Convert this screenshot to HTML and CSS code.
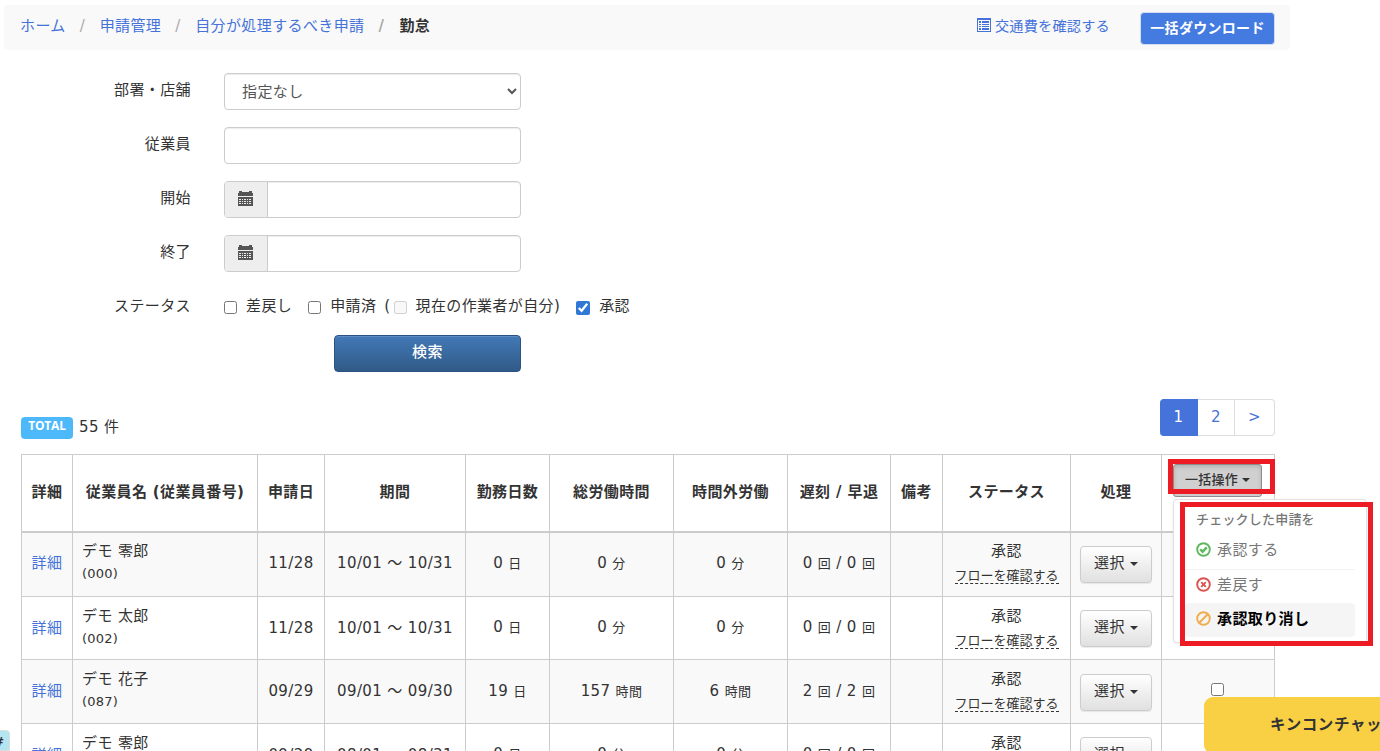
FILE: index.html
```
<!doctype html>
<html lang="ja">
  <head>
    <meta charset="utf-8" />
    <title>自分が処理するべき申請 - 勤怠</title>
    <meta name="viewport" content="width=device-width, initial-scale=1" />
    <link rel="stylesheet" href="styles.css">
  </head>

  <body>
    <svg class="defs" width="0" height="0">
      <symbol id="calendar" viewBox="0 0 15 16">
        <path d="M0 2h1V0h3v1h7V0h3v2h1v3H0z" />
        <path fill-rule="evenodd" d="M0 6h15v9H0zM1 8v1h2V8zm3 0v1h1V8zm2 0v1h2V8zm3 0v1h1V8zm2 0v1h2V8zM1 10v1h2v-1zm3 0v1h1v-1zm2 0v1h2v-1zm3 0v1h1v-1zm2 0v1h2v-1zM1 12v1h2v-1zm3 0v1h1v-1zm2 0v1h2v-1zm3 0v1h1v-1zm2 0v1h2v-1z" />
      </symbol>
    </svg>

    <div class="breadcrumb">
      <ul class="crumbs">
        <li><a href="#">ホーム</a></li>
        <li><a href="#">申請管理</a></li>
        <li><a href="#">自分が処理するべき申請</a></li>
        <li class="active">勤怠</li>
      </ul>
      <a class="expense-link" href="#">
        <svg width="14" height="14" viewBox="0 0 14 14">
          <path fill-rule="evenodd" d="M0 0h14v14H0zM1 2v11h12V2z" />
          <path d="M2 3h2v2H2zM5 3h7v2H5zM2 6h2v1H2zM5 6h7v1H5zM2 8h2v1H2zM5 8h7v1H5zM2 10h2v2H2zM5 10h7v2H5z" />
        </svg>交通費を確認する</a>
      <button class="btn-download">一括ダウンロード</button>
    </div>

    <form class="search">
      <label>部署・店舗</label>
      <select class="control"><option>指定なし</option></select>
      <label>従業員</label>
      <input class="control" type="text">
      <label>開始</label>
      <div class="control group">
        <span class="addon"><svg width="15" height="16"><use href="#calendar" /></svg></span>
        <input type="text">
      </div>
      <label>終了</label>
      <div class="control group">
        <span class="addon"><svg width="15" height="16"><use href="#calendar" /></svg></span>
        <input type="text">
      </div>
      <label>ステータス</label>
      <div class="checks">
        <input type="checkbox"><span class="c1">差戻し</span>
        <input type="checkbox"><span class="c2">申請済</span><span class="paren">(</span>
        <input type="checkbox" disabled><span class="c3">現在の作業者が自分)</span>
        <input type="checkbox" checked><span>承認</span>
      </div>
      <button class="btn-search" type="button">検索</button>
    </form>

    <div class="summary">
      <div class="total"><span class="badge">TOTAL</span>55 件</div>
      <div class="pagination">
        <a class="current" href="#">1</a><a href="#">2</a><a href="#">&gt;</a>
      </div>
    </div>

    <table class="list">
      <colgroup>
        <col class="w-detail"><col class="w-name"><col class="w-date"><col class="w-term">
        <col class="w-days"><col class="w-work"><col class="w-over"><col class="w-late">
        <col class="w-note"><col class="w-status"><col class="w-action"><col class="w-bulk">
      </colgroup>
      <thead>
        <tr>
          <th>詳細</th>
          <th>従業員名 (従業員番号)</th>
          <th>申請日</th>
          <th>期間</th>
          <th>勤務日数</th>
          <th>総労働時間</th>
          <th>時間外労働</th>
          <th>遅刻 / 早退</th>
          <th>備考</th>
          <th>ステータス</th>
          <th>処理</th>
          <th class="bulk">
            <div class="dropdown">
              <button class="btn-bulk">一括操作<i class="caret"></i></button>
              <div class="mark mark-button"></div>
              <div class="menu">
                <div class="menu-header">チェックした申請を</div>
                <a class="item">
                  <svg width="15" height="15" viewBox="0 0 15 15" fill="none" stroke="#5cb85c">
                    <circle cx="7.5" cy="7.5" r="6.3" stroke-width="1.9" />
                    <path d="M4.2 7.4l2.4 2.3 4.2-4.3" stroke-width="2.4" />
                  </svg>承認する</a>
                <div class="divider"></div>
                <a class="item">
                  <svg width="15" height="15" viewBox="0 0 15 15" fill="none" stroke="#d9534f">
                    <circle cx="7.5" cy="7.5" r="6.3" stroke-width="1.9" />
                    <path d="M5.2 5.2l4.6 4.6M9.8 5.2l-4.6 4.6" stroke-width="1.9" />
                  </svg>差戻す</a>
                <a class="item selected">
                  <svg width="15" height="15" viewBox="0 0 15 15" fill="none" stroke="#f0ad4e">
                    <circle cx="7.5" cy="7.5" r="6.3" stroke-width="1.9" />
                    <path d="M3.2 11.8l8.6-8.6" stroke-width="2" />
                  </svg>承認取り消し</a>
              </div>
              <div class="mark mark-menu"></div>
            </div>
          </th>
        </tr>
      </thead>
      <tbody>
        <tr>
          <td><a href="#">詳細</a></td>
          <td class="name">デモ 零郎<small>(000)</small></td>
          <td>11/28</td>
          <td>10/01 ～ 10/31</td>
          <td>0 <em>日</em></td>
          <td>0 <em>分</em></td>
          <td>0 <em>分</em></td>
          <td>0 <em>回</em> / 0 <em>回</em></td>
          <td></td>
          <td class="status">承認<span class="flow">フローを確認する</span></td>
          <td><button class="btn-select">選択<i class="caret"></i></button></td>
          <td><input type="checkbox"></td>
        </tr>
        <tr>
          <td><a href="#">詳細</a></td>
          <td class="name">デモ 太郎<small>(002)</small></td>
          <td>11/28</td>
          <td>10/01 ～ 10/31</td>
          <td>0 <em>日</em></td>
          <td>0 <em>分</em></td>
          <td>0 <em>分</em></td>
          <td>0 <em>回</em> / 0 <em>回</em></td>
          <td></td>
          <td class="status">承認<span class="flow">フローを確認する</span></td>
          <td><button class="btn-select">選択<i class="caret"></i></button></td>
          <td><input type="checkbox"></td>
        </tr>
        <tr>
          <td><a href="#">詳細</a></td>
          <td class="name">デモ 花子<small>(087)</small></td>
          <td>09/29</td>
          <td>09/01 ～ 09/30</td>
          <td>19 <em>日</em></td>
          <td>157 <em>時間</em></td>
          <td>6 <em>時間</em></td>
          <td>2 <em>回</em> / 2 <em>回</em></td>
          <td></td>
          <td class="status">承認<span class="flow">フローを確認する</span></td>
          <td><button class="btn-select">選択<i class="caret"></i></button></td>
          <td><input type="checkbox"></td>
        </tr>
        <tr>
          <td><a href="#">詳細</a></td>
          <td class="name">デモ 零郎<small>(000)</small></td>
          <td>09/29</td>
          <td>08/01 ～ 08/31</td>
          <td>0 <em>日</em></td>
          <td>0 <em>分</em></td>
          <td>0 <em>分</em></td>
          <td>0 <em>回</em> / 0 <em>回</em></td>
          <td></td>
          <td class="status">承認<span class="flow">フローを確認する</span></td>
          <td><button class="btn-select">選択<i class="caret"></i></button></td>
          <td><input type="checkbox"></td>
        </tr>
      </tbody>
    </table>

    <div class="hash">#</div>
    <div class="chat">キンコンチャット</div>
  </body>
</html>
```
FILE: styles.css
```
*,
*::before {
  box-sizing: border-box;
}
html,
body {
  height: 100%;
  overflow: hidden;
}
body {
  margin: 0;
  padding: 5px 0 0 4px;
  background: #fff;
  color: #333;
  font-family: 'DejaVu Sans', 'Noto Sans CJK JP', sans-serif;
  font-size: 15px;
  letter-spacing: 0.38px;
  line-height: 22px;
}
button,
select,
input {
  font: inherit;
  letter-spacing: inherit;
  color: inherit;
}
a {
  color: #4573d9;
  text-decoration: none;
}
.defs {
  position: absolute;
}

/* breadcrumb */
.breadcrumb {
  display: flex;
  align-items: flex-start;
  width: 1286px;
  height: 45px;
  padding: 7px 15px 0 16px;
  background: #f9f9f9;
  border-radius: 4px;
}
.crumbs {
  display: flex;
  flex: 1;
  margin: 3px 0 0;
  padding: 0;
  list-style: none;
}
.crumbs li + li::before {
  content: '/';
  display: inline-block;
  width: 34px;
  padding-left: 14px;
  color: #aaa;
}
.crumbs .active {
  font-weight: bold;
}
.crumbs li.active::before {
  width: 35px;
}
.expense-link {
  display: flex;
  align-items: center;
  gap: 4px;
  margin: 3px 30px 0 0;
  font-size: 14.2px;
  letter-spacing: 0.2px;
}
.expense-link svg {
  margin-bottom: 2px;
  fill: #4573d9;
}
.btn-download {
  width: 135px;
  height: 33px;
  padding: 0 0 2px;
  border: 1px solid #d5dcef;
  border-radius: 4px;
  background: #447be0;
  color: #fff;
  font-size: 14px;
  letter-spacing: 0.3px;
  font-weight: bold;
}

/* search form */
.search {
  display: grid;
  grid-template-columns: 187px 297px;
  grid-template-rows: 54px 54px 53.5px 54px 46.5px 37px;
  column-gap: 33px;
  padding-top: 23px;
}
.search label {
  padding-top: 6px;
  text-align: right;
}
.control {
  width: 297px;
  height: 37px;
  border: 1px solid #ccc;
  border-radius: 4px;
  background: #fff;
  box-shadow: inset 0 1px 1px rgba(0, 0, 0, 0.075);
  outline: none;
}
select.control {
  padding: 0 0 0 13px;
  color: #555;
}
.group {
  display: flex;
}
.group .addon {
  display: flex;
  align-items: center;
  justify-content: center;
  width: 43px;
  padding: 0 1px 1px 0;
  border-right: 1px solid #ccc;
  border-radius: 3px 0 0 3px;
  background: #eee;
}
.addon svg {
  fill: #555;
}
.group input {
  flex: 1;
  min-width: 0;
  border: 0;
  background: none;
}
.checks {
  display: flex;
  align-items: flex-start;
  padding-top: 6px;
  white-space: nowrap;
}
.checks input {
  flex: none;
  width: 13px;
  height: 13px;
  margin: 6px 9px 0 0;
  accent-color: #2f78d6;
}
.checks input:checked {
  width: 14px;
  height: 14px;
}
.c1 {
  margin-right: 16px;
}
.c2 {
  margin-right: 8px;
}
.paren {
  margin-right: 3px;
}
.c3 {
  margin-right: 16px;
}
.btn-search {
  grid-column: 2;
  width: 187px;
  height: 37px;
  margin-left: 110px;
  padding: 0 0 3px;
  border: 1px solid #2b5280;
  border-radius: 4px;
  background: linear-gradient(#4279b7, #305a87);
  box-shadow: inset 0 1px 0 rgba(255, 255, 255, 0.15);
  color: #fff;
  font-weight: 500;
}

/* total and pages */
.summary {
  display: flex;
  justify-content: space-between;
  width: 1271px;
  height: 55px;
  margin-top: 27px;
  padding-left: 17px;
}
.total {
  display: flex;
  padding-top: 17px;
}
.badge {
  width: 52px;
  height: 22px;
  margin: 1px 6px 0 0;
  border-radius: 4px;
  background: #4db8fa;
  color: #fff;
  font: bold 12px/18px 'Open Sans', sans-serif;
  letter-spacing: -0.2px;
  text-align: center;
}
.pagination {
  display: flex;
  height: 37px;
}
.pagination a {
  width: 37px;
  border: 1px solid #ddd;
  border-left: 0;
  line-height: 34px;
  text-align: center;
}
.pagination a:last-child {
  width: 40px;
  border-radius: 0 4px 4px 0;
}
.pagination .current {
  width: 38px;
  border-color: #4573d9;
  border-radius: 4px 0 0 4px;
  background: #4573d9;
  color: #fff;
}

/* list */
.list {
  width: 1254px;
  margin-left: 17px;
  border-collapse: collapse;
  table-layout: fixed;
}
.w-detail { width: 51px; }
.w-name { width: 185px; }
.w-date { width: 67px; }
.w-term { width: 141px; }
.w-days { width: 84px; }
.w-work { width: 124px; }
.w-over { width: 114px; }
.w-late { width: 103px; }
.w-note { width: 52px; }
.w-status { width: 128px; }
.w-action { width: 91px; }
.w-bulk { width: 113px; }
.list th,
.list td {
  padding: 0;
  border: 1px solid #ccc;
  text-align: center;
  vertical-align: middle;
  white-space: nowrap;
}
.list th {
  height: 77px;
  padding-bottom: 1px;
  border-bottom-width: 2px;
}
.list td {
  height: 63.7px;
  padding-bottom: 1px;
}
.list tbody tr:first-child td {
  height: 64.7px;
  padding-bottom: 2px;
}
.list tbody tr:nth-child(odd) {
  background: #f9f9f9;
}
.list .name {
  padding-left: 9px;
  text-align: left;
}
.name small {
  display: block;
  font-size: 13px;
  letter-spacing: 0.2px;
  line-height: 24px;
}
.list em {
  font-size: 13px;
  font-style: normal;
}
.flow {
  display: block;
  width: 104px;
  height: 17px;
  margin: 5px auto 2px;
  border-bottom: 1px dashed #333;
  font-size: 13px;
  letter-spacing: 0;
  line-height: 18px;
}
.list td input {
  width: 13px;
  height: 13px;
  margin: 2px 2px 0 0;
}
.caret {
  display: inline-block;
  margin-left: 5px;
  border: 4px solid transparent;
  border-top-color: #333;
  border-bottom: 0;
  vertical-align: 2px;
}
.btn-select {
  width: 72px;
  height: 37px;
  margin-top: 2px;
  padding: 0 0 3px;
  border: 1px solid #ccc;
  border-radius: 4px;
  background: linear-gradient(#fff, #e0e0e0);
  box-shadow: 0 1px 1px rgba(0, 0, 0, 0.08);
}

/* bulk operation menu */
.list .bulk {
  padding: 0 0 0 11px;
  text-align: left;
  vertical-align: top;
}
.dropdown {
  position: relative;
  padding-top: 9px;
  font-weight: normal;
}
.btn-bulk {
  display: block;
  width: 89px;
  height: 33px;
  padding: 0 0 2px;
  border: 1px solid #8c8c8c;
  border-radius: 3px;
  background: #d0d0d0;
  box-shadow: inset 0 2px 4px rgba(0, 0, 0, 0.15);
  font-size: 13px;
  font-weight: 500;
  letter-spacing: 0.2px;
}
.btn-bulk .caret {
  margin-left: 4px;
}
.mark {
  position: absolute;
  z-index: 3;
  border: 5px solid #ed1c24;
}
.mark-button {
  top: 4px;
  left: -5px;
  width: 107px;
  height: 35px;
}
.mark-menu {
  top: 47px;
  left: 7px;
  width: 193px;
  height: 144px;
}
.menu {
  position: absolute;
  z-index: 2;
  top: 44px;
  left: 0;
  width: 194px;
  height: 144px;
  padding: 9px 11px;
  border: 1px solid #e2e2e2;
  border-radius: 4px;
  background: #fff;
  box-shadow: 0 1px 3px rgba(0, 0, 0, 0.08);
}
.menu-header {
  padding-left: 11px;
  color: #777;
  font-size: 13px;
  font-weight: 500;
  letter-spacing: 0.2px;
}
.item {
  display: flex;
  align-items: center;
  gap: 6px;
  height: 34px;
  padding: 0 0 3px 11px;
  color: #777;
}
.menu-header + .item {
  margin-top: 3px;
}
.divider {
  height: 1px;
  margin: 1px 0 -1px;
  background: #f3f3f3;
}
.selected {
  border-radius: 4px;
  background: #f5f5f5;
  color: #000;
  font-weight: bold;
}

/* floating widgets */
.hash {
  position: fixed;
  bottom: 0;
  left: -10px;
  width: 20px;
  height: 21px;
  padding-left: 3px;
  border: 1px solid #ddd;
  border-radius: 4px 4px 0 0;
  background: #b4e6f2;
  font-size: 12px;
  font-weight: bold;
}
.chat {
  position: fixed;
  right: -120px;
  bottom: -3px;
  width: 296px;
  height: 57px;
  padding-left: 66px;
  border-radius: 9px;
  background: #f9d043;
  font-size: 15.5px;
  font-weight: bold;
  letter-spacing: 0.6px;
  line-height: 56px;
  z-index: 4;
}
```
